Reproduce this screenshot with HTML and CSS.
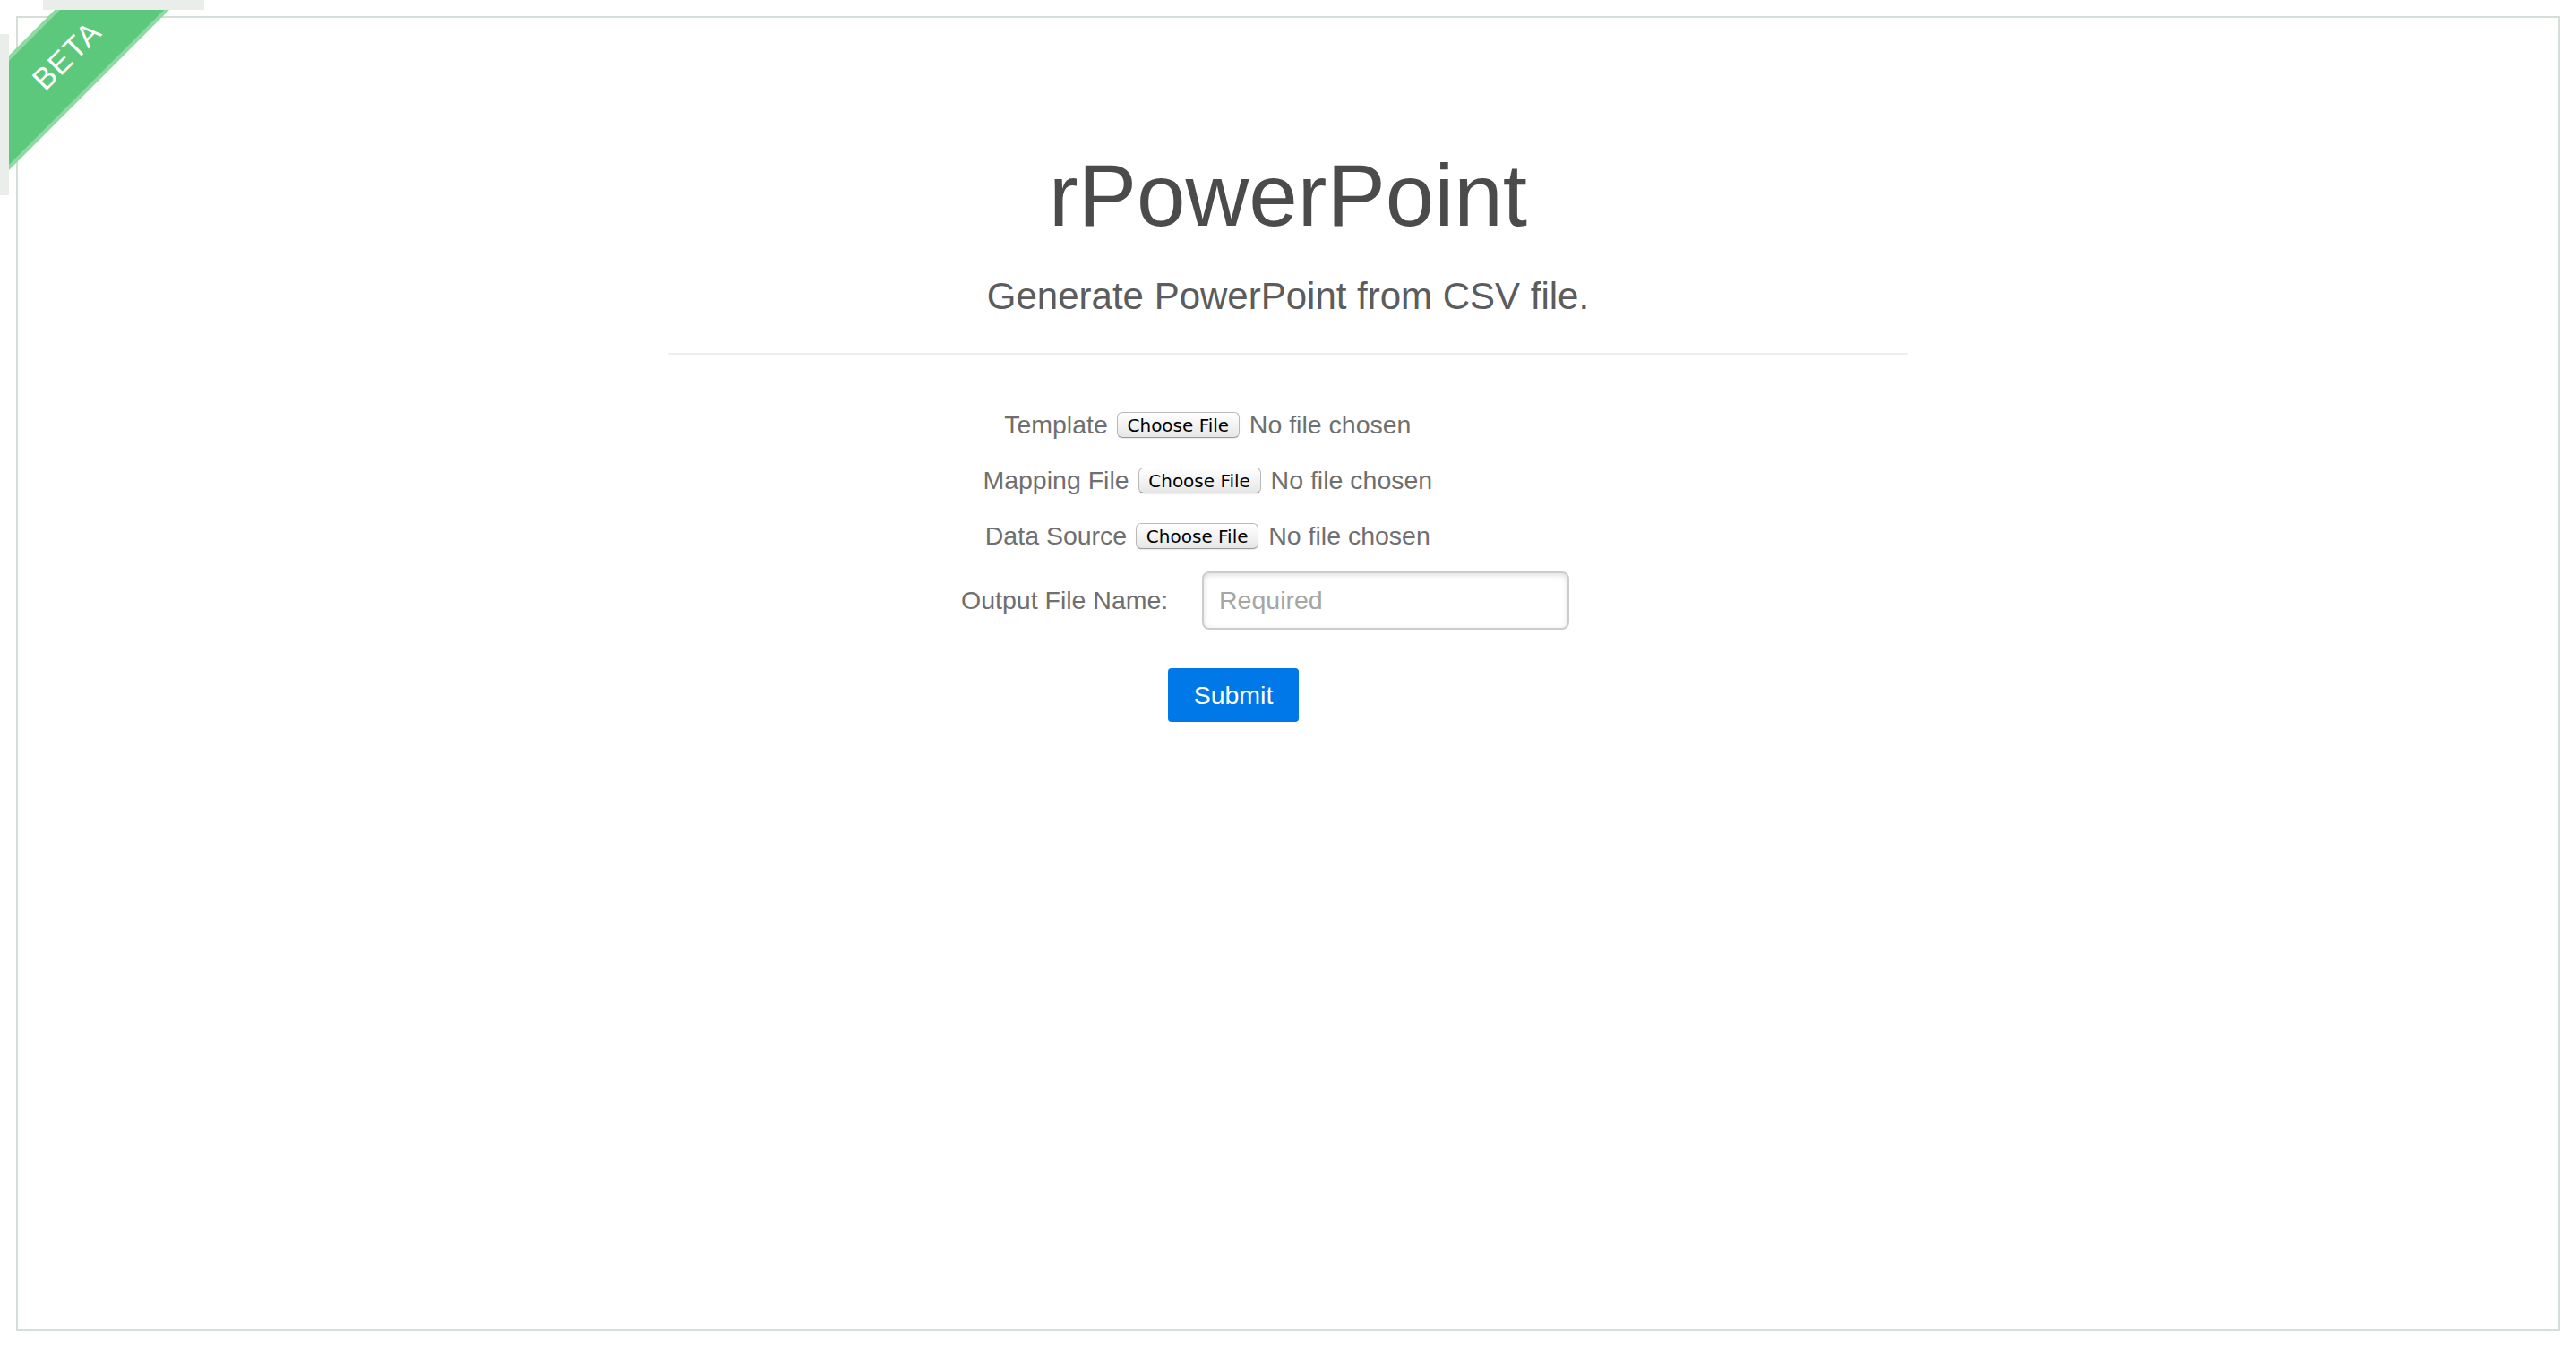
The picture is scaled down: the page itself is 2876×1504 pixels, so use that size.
FILE: index.html
```html
<!DOCTYPE html>
<html lang="en">
<head>
<meta charset="utf-8">
<title>rPowerPoint</title>
<link rel="stylesheet" href="styles.css">
</head>
<body>
<div class="ribbon-wrap" aria-hidden="true">
  <div class="ribbon">BETA</div>
  <span class="ribbon-edge ribbon-edge-top"></span>
  <span class="ribbon-edge ribbon-edge-left"></span>
</div>
<main class="page">
  <header class="header">
    <h1 class="title">rPowerPoint</h1>
    <p class="subtitle">Generate PowerPoint from CSV file.</p>
  </header>
  <hr class="divider">
  <form class="form">
    <div class="file-rows">
      <div class="file-row">
        <label class="file-label">Template</label>
        <span class="file-input"><button type="button" class="file-btn">Choose File</button><span class="file-status">No file chosen</span></span>
      </div>
      <div class="file-row">
        <label class="file-label">Mapping File</label>
        <span class="file-input"><button type="button" class="file-btn">Choose File</button><span class="file-status">No file chosen</span></span>
      </div>
      <div class="file-row">
        <label class="file-label">Data Source</label>
        <span class="file-input"><button type="button" class="file-btn">Choose File</button><span class="file-status">No file chosen</span></span>
      </div>
    </div>
    <div class="output">
      <div class="output-row">
        <label class="output-label" for="outname">Output File Name:</label>
        <input id="outname" class="text-input" type="text" placeholder="Required">
      </div>
      <div class="actions">
        <button type="submit" class="submit">Submit</button>
      </div>
    </div>
  </form>
</main>
</body>
</html>
```

FILE: styles.css
```css
html, body {
  margin: 0;
  padding: 0;
  background: #ffffff;
}

body {
  font-family: "Liberation Sans", Arial, Helvetica, sans-serif;
  position: relative;
}

/* ---------- BETA ribbon ---------- */
.ribbon-wrap {
  position: absolute;
  top: 0;
  left: 0;
  width: 240px;
  height: 240px;
  overflow: hidden;
  z-index: 10;
  pointer-events: none;
}

.ribbon {
  position: absolute;
  left: -132.5px;
  top: 22.5px;
  width: 400px;
  height: 90px;
  box-sizing: border-box;
  background: #5bc87b;
  border-top: 4px solid #8fd9a5;
  border-bottom: 4px solid #8fd9a5;
  transform: rotate(-45deg);
  transform-origin: 50% 50%;
  color: #ffffff;
  font-size: 34px;
  letter-spacing: 1.5px;
  line-height: 82px;
  text-align: center;
  padding-left: 18px;
}

.ribbon-edge {
  position: absolute;
  background: #eaeeeb;
}

.ribbon-edge-top {
  top: 0;
  left: 48px;
  width: 180px;
  height: 11px;
}

.ribbon-edge-left {
  top: 38px;
  left: 0;
  width: 10px;
  height: 180px;
}

/* ---------- page frame ---------- */
.page {
  margin: 18px;
  height: 1468px;
  box-sizing: border-box;
  border: 2px solid #d5dfd8;
}

.header {
  padding-top: 139px;
  text-align: center;
}

.title {
  margin: 0;
  font-size: 98px;
  line-height: 118px;
  font-weight: normal;
  color: #4b4b4b;
}

.subtitle {
  margin: 29px 0 0;
  font-size: 42px;
  line-height: 50px;
  color: #5c5c5c;
}

.divider {
  width: 1384px;
  height: 2px;
  margin: 38px auto 0;
  border: 0;
  background: #eeeeee;
}

/* ---------- form ---------- */
.form {
  margin-top: 64px;
}

.file-rows {
  display: flex;
  flex-direction: column;
  gap: 33px;
}

.file-row {
  display: flex;
  justify-content: center;
  align-items: center;
  gap: 10px;
  height: 29px;
}

.file-label,
.output-label {
  font-size: 28.5px;
  line-height: 29px;
  color: #6f6f6f;
}

.file-input {
  display: flex;
  align-items: center;
  gap: 11px;
  width: 508px;
}

.file-btn {
  width: 137px;
  height: 29px;
  box-sizing: border-box;
  padding: 2px 0 0;
  border: 1px solid #b9b9b9;
  border-bottom-color: #9a9a9a;
  border-radius: 6px;
  background: linear-gradient(#ffffff, #f1f1f1 60%, #e6e6e6);
  box-shadow: 0 1px 1px rgba(0, 0, 0, 0.08);
  font-family: "DejaVu Sans", "Liberation Sans", sans-serif;
  font-size: 20px;
  line-height: 25px;
  color: #000000;
}

.file-status {
  font-size: 28.5px;
  line-height: 29px;
  color: #6f6f6f;
  white-space: nowrap;
}

.output {
  width: 730px;
  margin: 25px auto 0;
}

.output-row {
  display: grid;
  grid-template-columns: 269px 461px;
  align-items: center;
  height: 65px;
}

.text-input {
  width: 410px;
  height: 65px;
  box-sizing: border-box;
  padding: 0 17px;
  border: 2px solid #cccccc;
  border-radius: 8px;
  box-shadow: inset 0 2px 6px #dddddd;
  font-family: "Liberation Sans", Arial, sans-serif;
  font-size: 28.5px;
  color: #333333;
  outline: none;
}

.text-input::placeholder {
  color: #a6a6a6;
}

.actions {
  margin-top: 43px;
  padding-left: 231px;
}

.submit {
  width: 146px;
  height: 60px;
  padding: 0;
  border: 0;
  border-radius: 4px;
  background: #0078e7;
  color: #ffffff;
  font-family: "Liberation Sans", Arial, sans-serif;
  font-size: 28.5px;
  line-height: 60px;
}
```
